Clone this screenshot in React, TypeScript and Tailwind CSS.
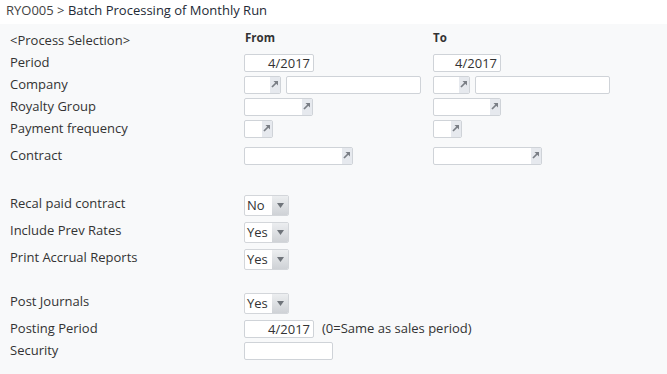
import React from "react";

function Lookup({ w }: { w: number }) {
  return (
    <div
      className="flex h-[18px] border border-[#cfd3d8] bg-white rounded-[2px] overflow-hidden"
      style={{ width: w }}
    >
      <div className="flex-1" />
      <div className="w-[10px] bg-[#e6e9ee] flex items-start justify-center pt-[3px]">
        <svg width="8" height="8" viewBox="0 0 8 8">
          <path d="M1 7 L6 2" stroke="#7a7f86" strokeWidth="1.7" />
          <path d="M2.5 1 H7 V5.5 Z" fill="#7a7f86" />
        </svg>
      </div>
    </div>
  );
}

function TextBox({ w, value }: { w: number; value?: string }) {
  return (
    <div
      className="h-[18px] border border-[#cfd3d8] bg-white rounded-[2px] text-right pr-[3px] text-[13px] leading-[16px] text-[#333]"
      style={{ width: w }}
    >
      {value}
    </div>
  );
}

function Select({ value }: { value: string }) {
  return (
    <div className="flex h-[21px] w-[45px] border border-[#d3d6da] bg-white rounded-[2px] overflow-hidden">
      <div className="flex-1 pl-[2px] text-[13px] leading-[19px] text-[#333]">{value}</div>
      <div className="w-[16px] bg-gradient-to-b from-[#eceef0] to-[#cfd2d6] flex items-center justify-center">
        <svg width="7" height="5" viewBox="0 0 7 5">
          <path d="M0 0 H7 L3.5 5 Z" fill="#6f747a" />
        </svg>
      </div>
    </div>
  );
}

function Row({
  label,
  className,
  lift,
  children,
}: {
  label?: string;
  className?: string;
  lift?: boolean;
  children?: React.ReactNode;
}) {
  return (
    <div className={`flex h-[22px] items-center ${className ?? ""}`}>
      <div className={`w-[234px] text-[13px] text-[#333] ${lift ? "-mt-[3px]" : ""}`}>{label}</div>
      {children}
    </div>
  );
}

export default function App() {
  return (
    <div className="w-[667px] h-[374px] bg-[#f8f9fa] overflow-hidden" style={{ fontFamily: '"Open Sans", sans-serif' }}>
      <div className="h-[24px] bg-white pl-[6px] text-[13px] leading-[20px] text-[#444]">
        RYO005 &gt; <span className="text-[#1e2a36] font-medium">Batch Processing of Monthly Run</span>
      </div>
      <div className="pl-[10px] pt-[6px]">
        <Row label="<Process Selection>">
          <div className="w-[189px] pl-[1px] text-[11.5px] font-bold text-[#333] -mt-[6px]">From</div>
          <div className="text-[11.5px] font-bold text-[#333] -mt-[6px]">To</div>
        </Row>
        <Row label="Period">
          <div className="w-[189px]"><TextBox w={70} value="4/2017" /></div>
          <TextBox w={68} value="4/2017" />
        </Row>
        <Row label="Company">
          <div className="w-[189px] flex gap-[5px]">
            <Lookup w={37} />
            <TextBox w={135} />
          </div>
          <div className="flex gap-[5px]">
            <Lookup w={37} />
            <TextBox w={135} />
          </div>
        </Row>
        <Row label="Royalty Group">
          <div className="w-[189px]"><Lookup w={69} /></div>
          <Lookup w={68} />
        </Row>
        <Row label="Payment frequency">
          <div className="w-[189px]"><Lookup w={29} /></div>
          <Lookup w={29} />
        </Row>
        <Row label="Contract" className="mt-[5px]">
          <div className="w-[189px]"><Lookup w={109} /></div>
          <Lookup w={109} />
        </Row>
        <Row label="Recal paid contract" lift className="mt-[27px]">
          <Select value="No" />
        </Row>
        <Row label="Include Prev Rates" lift className="mt-[5px]">
          <Select value="Yes" />
        </Row>
        <Row label="Print Accrual Reports" lift className="mt-[5px]">
          <Select value="Yes" />
        </Row>
        <Row label="Post Journals" lift className="mt-[22px]">
          <Select value="Yes" />
        </Row>
        <Row label="Posting Period" className="mt-[4px]">
          <TextBox w={70} value="4/2017" />
          <span className="ml-[8px] text-[13px] text-[#333]">(0=Same as sales period)</span>
        </Row>
        <Row label="Security">
          <TextBox w={89} />
        </Row>
      </div>
    </div>
  );
}
